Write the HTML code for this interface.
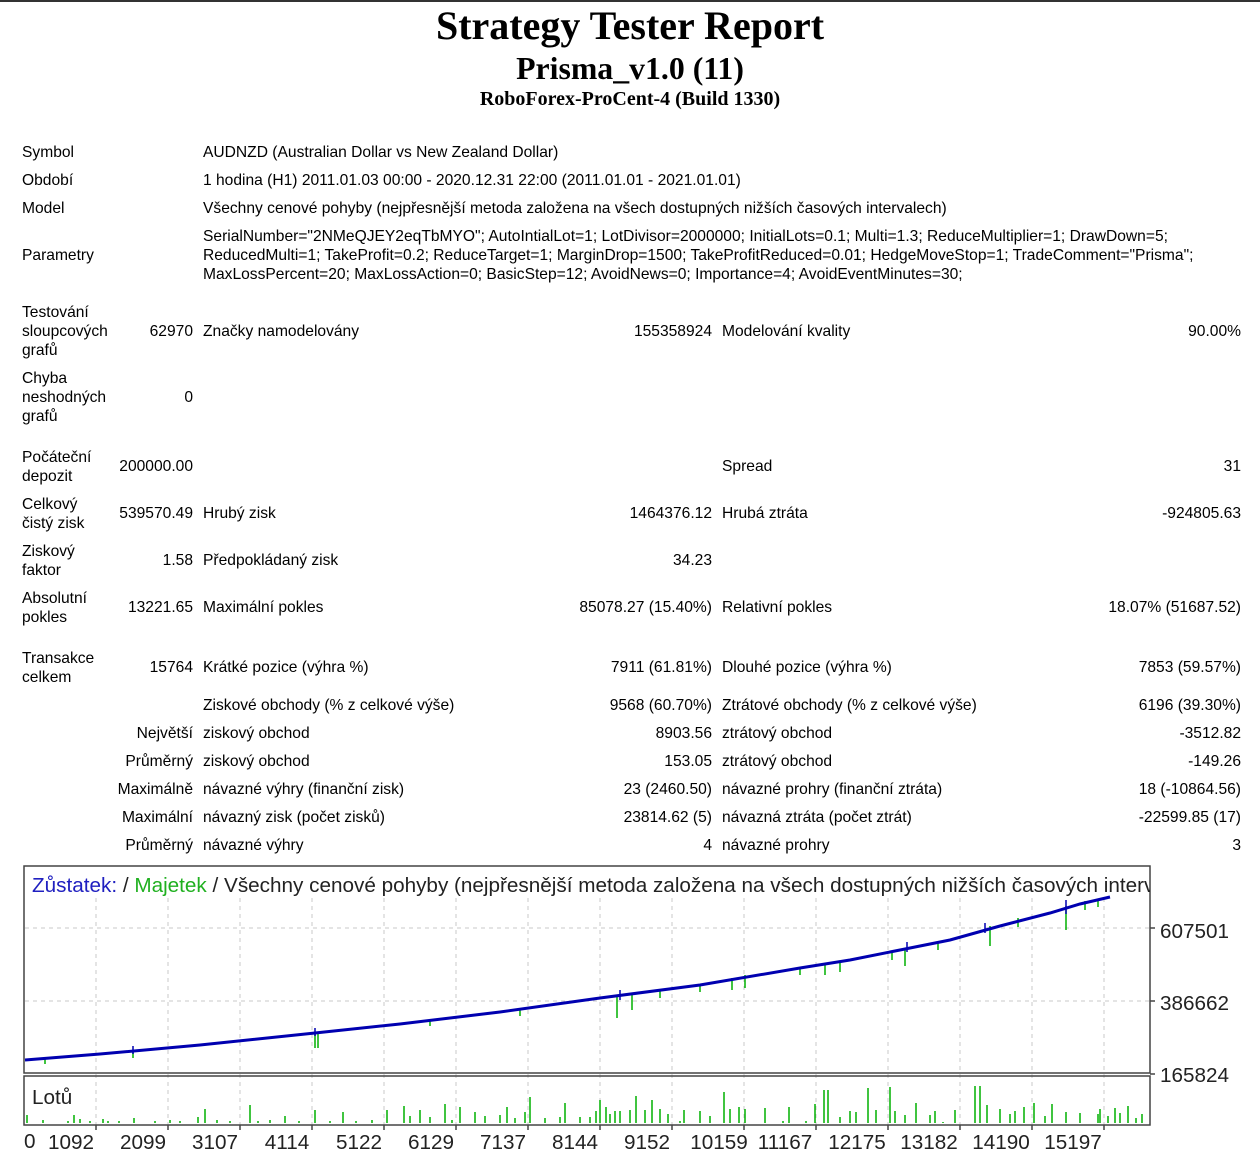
<!DOCTYPE html>
<html><head><meta charset="utf-8"><style>
html,body{margin:0;padding:0;background:#fff;}
body{width:1260px;height:1165px;position:relative;overflow:hidden;font-family:"Liberation Sans","DejaVu Sans",sans-serif;font-size:15.6px;color:#000;}
.t{position:absolute;line-height:19px;white-space:nowrap;}
.r{position:absolute;line-height:19px;white-space:nowrap;text-align:right;}
.h{position:absolute;left:0;width:1260px;text-align:center;font-family:"Liberation Serif",serif;font-weight:bold;white-space:nowrap;}
</style></head><body>
<div style="position:absolute;left:0;top:0;width:1260px;height:2px;background:#333"></div>
<div class="h" style="top:3px;font-size:40px;line-height:46px;">Strategy Tester Report</div>
<div class="h" style="top:51px;font-size:31.8px;line-height:36px;">Prisma_v1.0 (11)</div>
<div class="h" style="top:88px;font-size:20px;line-height:22px;">RoboForex-ProCent-4 (Build 1330)</div>

<div class="t" style="left:22px;top:143px">Symbol</div>
<div class="t" style="left:203px;top:143px">AUDNZD (Australian Dollar vs New Zealand Dollar)</div>
<div class="t" style="left:22px;top:171px">Období</div>
<div class="t" style="left:203px;top:171px">1 hodina (H1) 2011.01.03 00:00 - 2020.12.31 22:00 (2011.01.01 - 2021.01.01)</div>
<div class="t" style="left:22px;top:199px">Model</div>
<div class="t" style="left:203px;top:199px">Všechny cenové pohyby (nejpřesnější metoda založena na všech dostupných nižších časových intervalech)</div>
<div class="t" style="left:22px;top:246px">Parametry</div>
<div class="t" style="left:203px;top:227px">SerialNumber="2NMeQJEY2eqTbMYO"; AutoIntialLot=1; LotDivisor=2000000; InitialLots=0.1; Multi=1.3; ReduceMultiplier=1; DrawDown=5;</div>
<div class="t" style="left:203px;top:246px">ReducedMulti=1; TakeProfit=0.2; ReduceTarget=1; MarginDrop=1500; TakeProfitReduced=0.01; HedgeMoveStop=1; TradeComment="Prisma";</div>
<div class="t" style="left:203px;top:265px">MaxLossPercent=20; MaxLossAction=0; BasicStep=12; AvoidNews=0; Importance=4; AvoidEventMinutes=30;</div>

<div class="t" style="left:22px;top:303px">Testování<br>sloupcových<br>grafů</div>
<div class="r" style="right:1067px;top:322px">62970</div>
<div class="t" style="left:203px;top:322px">Značky namodelovány</div>
<div class="r" style="right:548px;top:322px">155358924</div>
<div class="t" style="left:722px;top:322px">Modelování kvality</div>
<div class="r" style="right:19px;top:322px">90.00%</div>

<div class="t" style="left:22px;top:369px">Chyba<br>neshodných<br>grafů</div>
<div class="r" style="right:1067px;top:388px">0</div>

<div class="t" style="left:22px;top:448px">Počáteční<br>depozit</div>
<div class="r" style="right:1067px;top:457px">200000.00</div>
<div class="t" style="left:722px;top:457px">Spread</div>
<div class="r" style="right:19px;top:457px">31</div>

<div class="t" style="left:22px;top:495px">Celkový<br>čistý zisk</div>
<div class="r" style="right:1067px;top:504px">539570.49</div>
<div class="t" style="left:203px;top:504px">Hrubý zisk</div>
<div class="r" style="right:548px;top:504px">1464376.12</div>
<div class="t" style="left:722px;top:504px">Hrubá ztráta</div>
<div class="r" style="right:19px;top:504px">-924805.63</div>

<div class="t" style="left:22px;top:542px">Ziskový<br>faktor</div>
<div class="r" style="right:1067px;top:551px">1.58</div>
<div class="t" style="left:203px;top:551px">Předpokládaný zisk</div>
<div class="r" style="right:548px;top:551px">34.23</div>

<div class="t" style="left:22px;top:589px">Absolutní<br>pokles</div>
<div class="r" style="right:1067px;top:598px">13221.65</div>
<div class="t" style="left:203px;top:598px">Maximální pokles</div>
<div class="r" style="right:548px;top:598px">85078.27 (15.40%)</div>
<div class="t" style="left:722px;top:598px">Relativní pokles</div>
<div class="r" style="right:19px;top:598px">18.07% (51687.52)</div>

<div class="t" style="left:22px;top:649px">Transakce<br>celkem</div>
<div class="r" style="right:1067px;top:658px">15764</div>
<div class="t" style="left:203px;top:658px">Krátké pozice (výhra %)</div>
<div class="r" style="right:548px;top:658px">7911 (61.81%)</div>
<div class="t" style="left:722px;top:658px">Dlouhé pozice (výhra %)</div>
<div class="r" style="right:19px;top:658px">7853 (59.57%)</div>

<div class="t" style="left:203px;top:696px">Ziskové obchody (% z celkové výše)</div>
<div class="r" style="right:548px;top:696px">9568 (60.70%)</div>
<div class="t" style="left:722px;top:696px">Ztrátové obchody (% z celkové výše)</div>
<div class="r" style="right:19px;top:696px">6196 (39.30%)</div>

<div class="r" style="right:1067px;top:724px">Největší</div>
<div class="t" style="left:203px;top:724px">ziskový obchod</div>
<div class="r" style="right:548px;top:724px">8903.56</div>
<div class="t" style="left:722px;top:724px">ztrátový obchod</div>
<div class="r" style="right:19px;top:724px">-3512.82</div>

<div class="r" style="right:1067px;top:752px">Průměrný</div>
<div class="t" style="left:203px;top:752px">ziskový obchod</div>
<div class="r" style="right:548px;top:752px">153.05</div>
<div class="t" style="left:722px;top:752px">ztrátový obchod</div>
<div class="r" style="right:19px;top:752px">-149.26</div>

<div class="r" style="right:1067px;top:780px">Maximálně</div>
<div class="t" style="left:203px;top:780px">návazné výhry (finanční zisk)</div>
<div class="r" style="right:548px;top:780px">23 (2460.50)</div>
<div class="t" style="left:722px;top:780px">návazné prohry (finanční ztráta)</div>
<div class="r" style="right:19px;top:780px">18 (-10864.56)</div>

<div class="r" style="right:1067px;top:808px">Maximální</div>
<div class="t" style="left:203px;top:808px">návazný zisk (počet zisků)</div>
<div class="r" style="right:548px;top:808px">23814.62 (5)</div>
<div class="t" style="left:722px;top:808px">návazná ztráta (počet ztrát)</div>
<div class="r" style="right:19px;top:808px">-22599.85 (17)</div>

<div class="r" style="right:1067px;top:836px">Průměrný</div>
<div class="t" style="left:203px;top:836px">návazné výhry</div>
<div class="r" style="right:548px;top:836px">4</div>
<div class="t" style="left:722px;top:836px">návazné prohry</div>
<div class="r" style="right:19px;top:836px">3</div>

<svg style="position:absolute;left:0;top:0" width="1260" height="1165" viewBox="0 0 1260 1165" font-family="Liberation Sans, DejaVu Sans, sans-serif">
<defs><clipPath id="cp"><rect x="24" y="866" width="1126" height="40"/></clipPath></defs>
<g stroke="#c8c8c8" stroke-width="1" stroke-dasharray="4,4">
<line x1="25" y1="928" x2="1150" y2="928"/><line x1="25" y1="1001" x2="1150" y2="1001"/>
<line x1="96" y1="898" x2="96" y2="1125"/><line x1="168" y1="898" x2="168" y2="1125"/><line x1="240" y1="898" x2="240" y2="1125"/><line x1="312" y1="898" x2="312" y2="1125"/><line x1="384" y1="898" x2="384" y2="1125"/><line x1="456" y1="898" x2="456" y2="1125"/><line x1="528" y1="898" x2="528" y2="1125"/><line x1="600" y1="898" x2="600" y2="1125"/><line x1="672" y1="898" x2="672" y2="1125"/><line x1="744" y1="898" x2="744" y2="1125"/><line x1="816" y1="898" x2="816" y2="1125"/><line x1="888" y1="898" x2="888" y2="1125"/><line x1="960" y1="898" x2="960" y2="1125"/><line x1="1032" y1="898" x2="1032" y2="1125"/><line x1="1104" y1="898" x2="1104" y2="1125"/>
</g>
<rect x="24" y="866" width="1126" height="207" fill="none" stroke="#444" stroke-width="1.5"/>
<rect x="24" y="1076" width="1126" height="49" fill="none" stroke="#444" stroke-width="1.5"/>
<g stroke="#444" stroke-width="1.5"><line x1="1150" y1="928" x2="1155" y2="928"/><line x1="1150" y1="1001" x2="1155" y2="1001"/><line x1="1150" y1="1074" x2="1155" y2="1074"/>
<line x1="96" y1="1125" x2="96" y2="1130"/><line x1="168" y1="1125" x2="168" y2="1130"/><line x1="240" y1="1125" x2="240" y2="1130"/><line x1="312" y1="1125" x2="312" y2="1130"/><line x1="384" y1="1125" x2="384" y2="1130"/><line x1="456" y1="1125" x2="456" y2="1130"/><line x1="528" y1="1125" x2="528" y2="1130"/><line x1="600" y1="1125" x2="600" y2="1130"/><line x1="672" y1="1125" x2="672" y2="1130"/><line x1="744" y1="1125" x2="744" y2="1130"/><line x1="816" y1="1125" x2="816" y2="1130"/><line x1="888" y1="1125" x2="888" y2="1130"/><line x1="960" y1="1125" x2="960" y2="1130"/><line x1="1032" y1="1125" x2="1032" y2="1130"/><line x1="1104" y1="1125" x2="1104" y2="1130"/></g>
<text x="32" y="892" font-size="20.7" fill="#222" clip-path="url(#cp)"><tspan fill="#2020c0">Zůstatek:</tspan> / <tspan fill="#20b020">Majetek</tspan> / Všechny cenové pohyby (nejpřesnější metoda založena na všech dostupných nižších časových intervalech)</text>
<g stroke="#00b000" stroke-width="1.5">
<line x1="45" y1="1058" x2="45" y2="1064"/><line x1="133" y1="1050" x2="133" y2="1058"/><line x1="315" y1="1032" x2="315" y2="1048"/><line x1="318" y1="1034" x2="318" y2="1048"/><line x1="430" y1="1019" x2="430" y2="1026"/><line x1="520" y1="1008" x2="520" y2="1016"/><line x1="617" y1="995" x2="617" y2="1018"/><line x1="632" y1="993" x2="632" y2="1010"/><line x1="660" y1="990" x2="660" y2="998"/><line x1="700" y1="984" x2="700" y2="992"/><line x1="732" y1="978" x2="732" y2="990"/><line x1="745" y1="975" x2="745" y2="988"/><line x1="800" y1="967" x2="800" y2="975"/><line x1="825" y1="964" x2="825" y2="975"/><line x1="840" y1="961" x2="840" y2="972"/><line x1="892" y1="951" x2="892" y2="960"/><line x1="905" y1="948" x2="905" y2="966"/><line x1="938" y1="942" x2="938" y2="950"/><line x1="990" y1="926" x2="990" y2="946"/><line x1="1018" y1="918" x2="1018" y2="927"/><line x1="1066" y1="906" x2="1066" y2="930"/><line x1="1085" y1="901" x2="1085" y2="910"/><line x1="1098" y1="899" x2="1098" y2="907"/>
</g>
<polyline fill="none" stroke="#0000b0" stroke-width="3" points="25,1060 100,1054 200,1045 315,1033 400,1024 500,1012 600,998 700,985 800,968 850,960 900,950 950,940 1000,926 1050,913 1080,904 1110,897"/>
<g stroke="#0000b0" stroke-width="1.5"><line x1="133" y1="1046" x2="133" y2="1054"/><line x1="315" y1="1028" x2="315" y2="1036"/><line x1="620" y1="990" x2="620" y2="1000"/><line x1="907" y1="942" x2="907" y2="952"/><line x1="1066" y1="900" x2="1066" y2="914"/><line x1="985" y1="923" x2="985" y2="933"/></g>
<text x="32" y="1104" font-size="20.7" fill="#222">Lotů</text>
<g stroke="#00b000" stroke-width="1.5">
<path d="M27 1123V1115M43 1123V1120M68 1123V1121M74 1123V1115M80 1123V1119M90 1123V1121M103 1123V1119M108 1123V1121M119 1123V1121M134 1123V1118M155 1123V1121M170 1123V1120M180 1123V1121M198 1123V1117M205 1123V1109M217 1123V1120M230 1123V1121M250 1123V1105M258 1123V1121M270 1123V1120M285 1123V1116M299 1123V1121M315 1123V1110M330 1123V1121M343 1123V1112M356 1123V1121M372 1123V1120M387 1123V1110M404 1123V1106M410 1123V1116M420 1123V1110M430 1123V1117M445 1123V1104M452 1123V1120M460 1123V1107M475 1123V1112M485 1123V1116M500 1123V1115M507 1123V1107M515 1123V1118M525 1123V1112M530 1123V1097M545 1123V1118M560 1123V1117M565 1123V1103M580 1123V1117M590 1123V1117M596 1123V1111M600 1123V1100M606 1123V1107M610 1123V1114M615 1123V1111M620 1123V1111M630 1123V1110M636 1123V1096M645 1123V1110M652 1123V1100M660 1123V1109M668 1123V1114M680 1123V1121M684 1123V1110M700 1123V1111M710 1123V1116M724 1123V1092M730 1123V1109M739 1123V1107M745 1123V1109M765 1123V1108M783 1123V1121M789 1123V1107M806 1123V1121M815 1123V1104M824 1123V1090M828 1123V1090M840 1123V1117M850 1123V1111M856 1123V1112M868 1123V1088M876 1123V1110M890 1123V1087M895 1123V1111M905 1123V1115M916 1123V1103M930 1123V1115M935 1123V1111M943 1123V1122M955 1123V1110M975 1123V1086M980 1123V1086M987 1123V1105M1000 1123V1109M1010 1123V1114M1015 1123V1111M1024 1123V1107M1034 1123V1103M1045 1123V1116M1052 1123V1104M1066 1123V1112M1080 1123V1113M1098 1123V1114M1100 1123V1109M1108 1123V1116M1115 1123V1108M1120 1123V1113M1128 1123V1106M1136 1123V1118M1142 1123V1114"/>
</g>
<g font-size="20.7" fill="#222">
<text x="1160" y="938">607501</text><text x="1160" y="1010">386662</text><text x="1160" y="1082">165824</text>
<text x="24" y="1148">0</text>
<g text-anchor="middle"><text x="71" y="1149">1092</text><text x="143" y="1149">2099</text><text x="215" y="1149">3107</text><text x="287" y="1149">4114</text><text x="359" y="1149">5122</text><text x="431" y="1149">6129</text><text x="503" y="1149">7137</text><text x="575" y="1149">8144</text><text x="647" y="1149">9152</text><text x="719" y="1149">10159</text><text x="785" y="1149">11167</text><text x="857" y="1149">12175</text><text x="929" y="1149">13182</text><text x="1001" y="1149">14190</text><text x="1073" y="1149">15197</text></g>
</g>
</svg>
</body></html>
